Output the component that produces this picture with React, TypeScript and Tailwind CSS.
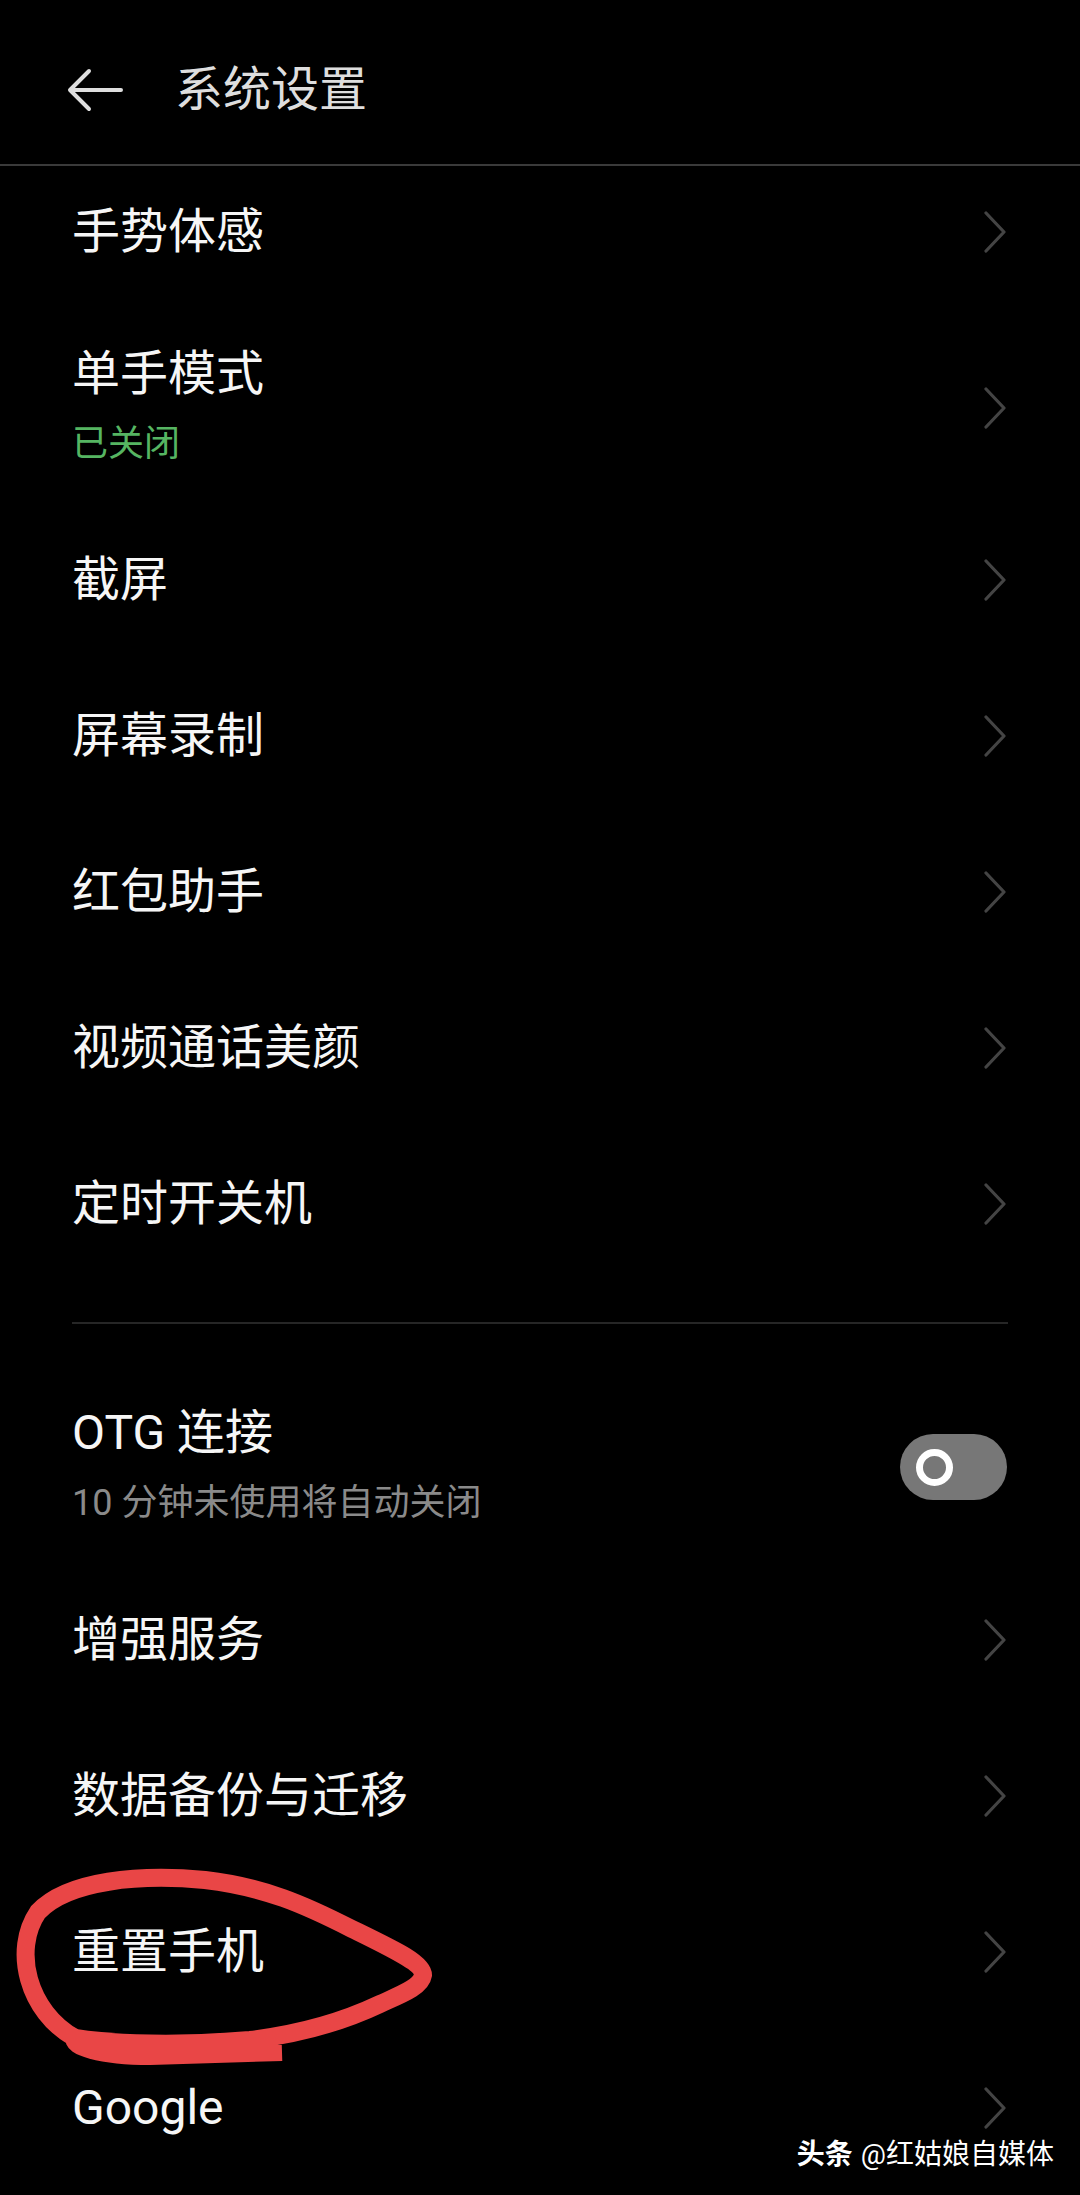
import React from 'react'

const FONT = { fontFamily: 'Roboto, "Noto Sans CJK SC", sans-serif' }

function Chevron() {
  return (
    <svg width="24" height="42" viewBox="0 0 24 42" fill="none" className="shrink-0">
      <path d="M3 2 L21 21 L3 40" stroke="#444444" strokeWidth="3.2" strokeLinecap="round" strokeLinejoin="round" />
    </svg>
  )
}

interface RowProps {
  title: string
  sub?: string
  subColor?: string
  tall?: boolean
  right?: React.ReactNode
  className?: string
}

function Row({ title, sub, subColor, tall, right, className }: RowProps) {
  return (
    <div
      className={`flex items-center justify-between pl-[72px] pr-[73px] ${tall ? 'h-[196px]' : 'h-[156px]'} ${className ?? ''}`}
    >
      <div className="flex flex-col">
        <span className="text-[48px] leading-[68px] text-[#f6f6f6]">{title}</span>
        {sub && (
          <span className="mt-[4px] text-[36px] leading-[64px]" style={{ color: subColor }}>
            {sub}
          </span>
        )}
      </div>
      {right ?? <Chevron />}
    </div>
  )
}

function Toggle() {
  return (
    <div className="flex items-center w-[107px] h-[66px] rounded-full bg-[#777777] pl-[16px]">
      <div className="w-[37px] h-[37px] rounded-full border-[7px] border-white" />
    </div>
  )
}

export default function App() {
  return (
    <div className="relative w-[1080px] h-[2195px] bg-black overflow-hidden" style={FONT}>
      <div className="flex items-center h-[164px] pt-[16px] pl-[67px] gap-[52px]">
        <svg width="56" height="44" viewBox="0 0 56 44" fill="none">
          <path d="M54 22 H4 M22 3 L3 22 L22 41" stroke="#dedede" strokeWidth="4" strokeLinecap="round" strokeLinejoin="round" />
        </svg>
        <span className="text-[48px] leading-none text-[#dedede]">系统设置</span>
      </div>
      <div className="h-[2px] bg-[#3a3a3a]" />

      <div className="flex flex-col">
        <Row title="手势体感" className="!h-[140px] pb-[8px]" />
        <Row title="单手模式" sub="已关闭" subColor="#56b562" tall className="pt-[8px]" />
        <Row title="截屏" />
        <Row title="屏幕录制" />
        <Row title="红包助手" />
        <Row title="视频通话美颜" />
        <Row title="定时开关机" />
        <div className="pt-[40px] pb-[44px] px-[72px]">
          <div className="h-[2px] bg-[#262626]" />
        </div>
        <Row title="OTG 连接" sub="10 分钟未使用将自动关闭" subColor="#8a8a8a" tall right={<Toggle />} className="!h-[194px] pt-[4px]" />
        <Row title="增强服务" />
        <Row title="数据备份与迁移" />
        <Row title="重置手机" />
        <Row title="Google" />
      </div>

      <svg
        className="absolute inset-0 pointer-events-none"
        width="1080"
        height="2195"
        viewBox="0 0 1080 2195"
        fill="none"
      >
        <path
          d="M75 2038 C28 2012 12 1950 38 1912 C68 1880 140 1874 205 1880 C265 1887 305 1905 352 1929 C395 1950 423 1963 423 1975 C421 1987 402 1994 380 2004 C340 2023 300 2034 250 2040 C180 2046 112 2044 75 2038 C70 2046 100 2056 150 2056 L282 2052"
          stroke="#e94646"
          strokeWidth="18"
          strokeLinecap="butt"
          strokeLinejoin="round"
        />
      </svg>

      <div
        className="absolute right-[26px] top-[2136px] flex items-center gap-[8px] text-[28px] leading-[38px] text-white"
        style={{ textShadow: '0 0 2px rgba(0,0,0,0.6)' }}
      >
        <span className="font-bold">头条</span>
        <span>@红姑娘自媒体</span>
      </div>
    </div>
  )
}
